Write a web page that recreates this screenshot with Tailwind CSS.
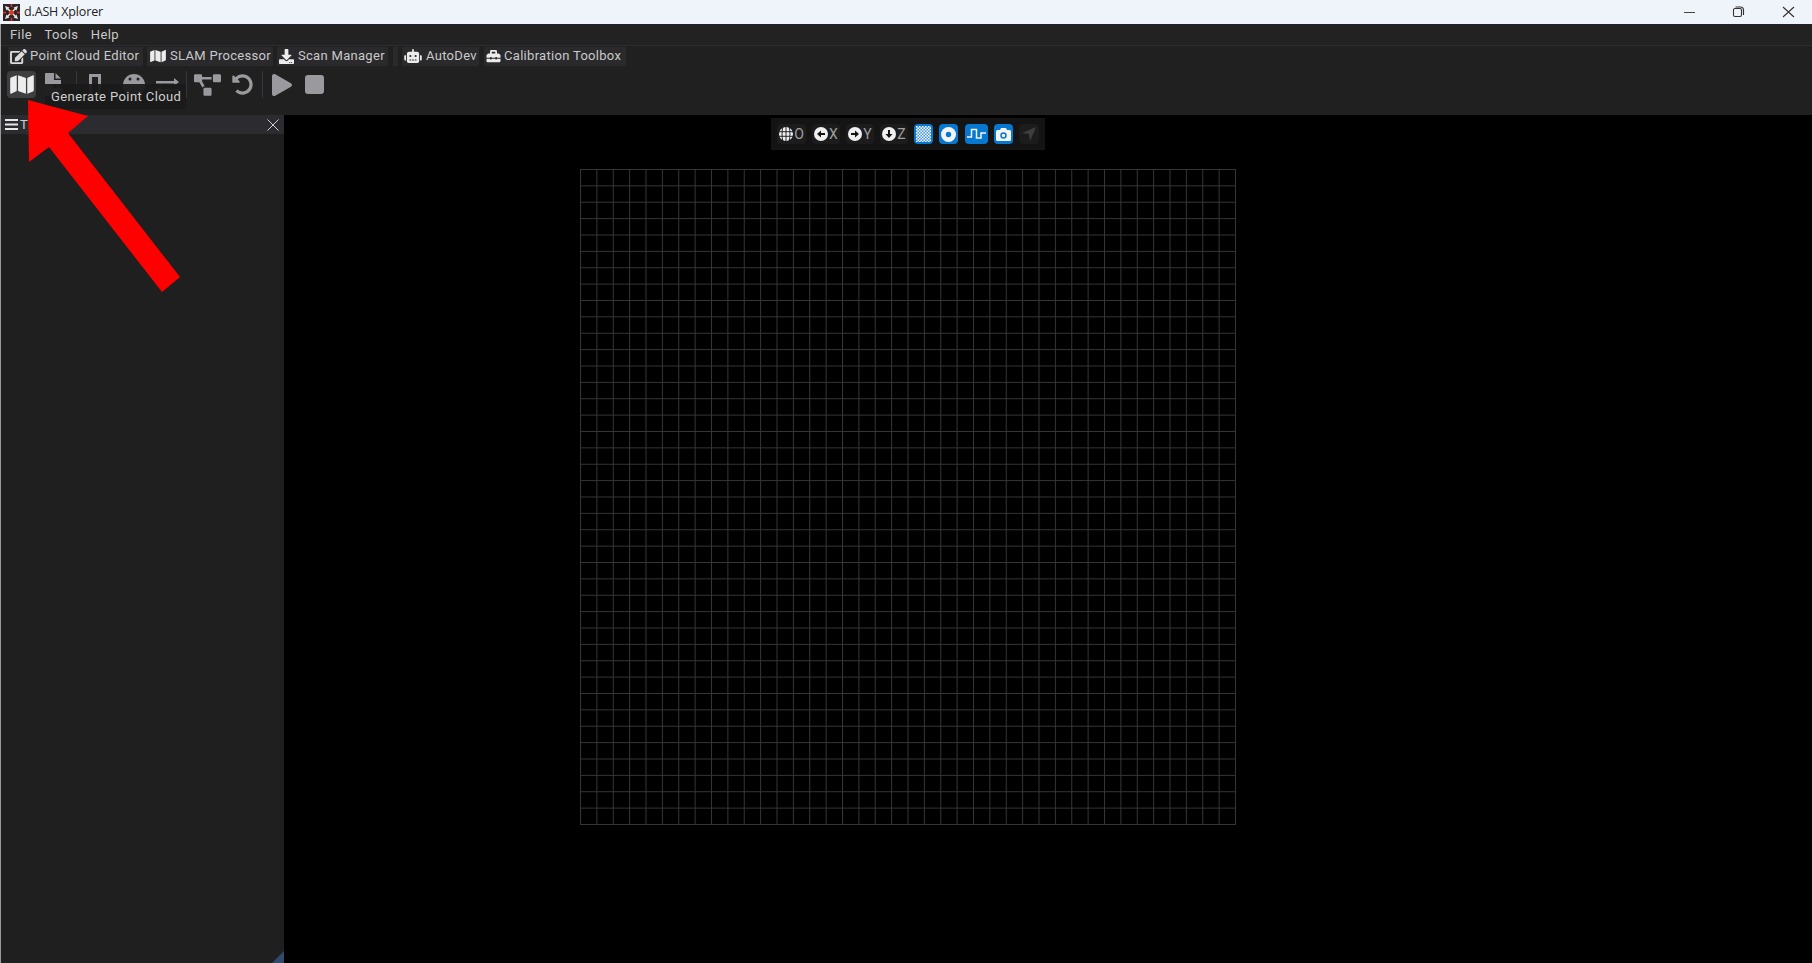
<!doctype html>
<html><head><meta charset="utf-8"><script src="https://cdn.jsdelivr.net/npm/@tailwindcss/browser@4"></script></head>
<body class="w-[1812px] h-[963px] overflow-hidden bg-black font-['Roboto',sans-serif]">
<div class="relative w-[1812px] h-[963px] flex flex-col border-l border-[#9a9a9a]">
  <div class="h-6 shrink-0 bg-[#eff4fb] flex items-center -ml-px">
    <svg class="w-[17px] h-[17px] ml-[3px]" viewBox="0 0 17 17"><rect width="17" height="17" fill="#2b2428"/><path d="M2 2l4.500 1.500-3 3zM15 2l-4.500 1.500 3 3zM2 15l4.500-1.500-3-3zM15 15l-4.500-1.500 3-3z" fill="#e9e3dc"/><path d="M4 4l9 9M13 4l-9 9" stroke="#e9e3dc" stroke-width="1.500"/><path d="M8.500 5.500l3 3-3 3-3-3z" fill="#e8351f"/><path d="M8.500 0v3M8.500 14v3M0 8.500h3M14 8.500h3" stroke="#e8351f" stroke-width="1.500"/></svg>
    <span class="ml-1 text-[12.5px] text-[#222] whitespace-nowrap font-['Open_Sans',sans-serif] tracking-[-0.15px]">d.ASH Xplorer</span>
    <div class="ml-auto flex items-center">
      <div class="w-[47px] flex justify-center"><div class="w-[11px] h-px bg-[#444]"></div></div>
      <svg class="w-[50px] h-3" viewBox="0 0 50 12" fill="none" stroke="#333" stroke-width="1.100"><rect x="20.500" y="2.500" width="8" height="8" rx="1.500"/><path d="M22.500 1h5a3 3 0 0 1 3 3v5"/></svg>
      <svg class="w-[49px] h-3" viewBox="0 0 49 12" fill="none" stroke="#333" stroke-width="1.100"><path d="M20 1l11 10M31 1L20 11"/></svg>
    </div>
  </div>
  <div class="h-[21px] shrink-0 bg-[#222222] flex items-center pl-[9px] gap-[12.500px] text-[13px] tracking-[0.4px] text-[#c9c9c9] whitespace-nowrap">
    <span>File</span><span>Tools</span><span>Help</span>
  </div>
  <div class="h-[21px] shrink-0 bg-[#202020] border-t border-[#2b2e31] flex items-center pl-[7px] text-[13px] tracking-[0.3px] text-[#c9c9c9] whitespace-nowrap">
    <div class="h-[19px] w-[135px] bg-[#2a2a2c] flex items-center gap-[3px] pl-[2px]">
      <svg class="w-[17px] h-[15px]" viewBox="0 0 576 512" fill="#dcdcdc"><path d="M402.600 83.200l90.200 90.200c3.800 3.800 3.800 10 0 13.800L274.400 405.600l-92.800 10.300c-12.400 1.400-22.900-9.100-21.500-21.500l10.300-92.800L388.800 83.200c3.800-3.800 10-3.800 13.800 0zm162-22.900l-48.800-48.800c-15.200-15.200-39.900-15.200-55.200 0l-35.400 35.400c-3.800 3.800-3.800 10 0 13.800l90.200 90.200c3.800 3.800 10 3.800 13.800 0l35.400-35.400c15.200-15.300 15.200-40 0-55.200zM384 346.200V448H64V128h229.800c3.200 0 6.200-1.300 8.500-3.500l40-40c7.600-7.600 2.200-20.500-8.500-20.500H48C21.500 64 0 85.500 0 112v352c0 26.500 21.500 48 48 48h352c26.500 0 48-21.500 48-48V306.200c0-10.700-12.900-16-20.500-8.500l-40 40c-2.200 2.300-3.500 5.300-3.500 8.500z"/></svg>
      <span>Point Cloud Editor</span>
    </div>
    <div class="h-[19px] w-[126px] ml-1 bg-[#2a2a2c] flex items-center gap-1 pl-[3px]">
      <svg class="w-4 h-[14px]" viewBox="0 0 576 512" fill="#ececec"><path d="M0 117.660v346.320c0 11.320 11.430 19.060 21.940 14.860L160 416V32L20.120 87.950A32.006 32.006 0 0 0 0 117.660zM192 416l192 64V96L192 32v384zM554.060 33.160L416 96v384l139.880-55.950A31.996 31.996 0 0 0 576 394.340V48.020c0-11.320-11.430-19.060-21.940-14.860z"/></svg>
      <span>SLAM Processor</span>
    </div>
    <div class="h-[19px] w-[111px] ml-1 bg-[#2a2a2c] flex items-center gap-1 pl-[2px]">
      <svg class="w-[15px] h-[15px]" viewBox="0 0 512 512" fill="#ececec"><path d="M216 0h80c13.300 0 24 10.700 24 24v168h87.700c17.800 0 26.700 21.500 14.100 34.100L269.700 378.300c-7.500 7.500-19.800 7.500-27.300 0L90.100 226.100c-12.600-12.600-3.700-34.100 14.100-34.100H192V24c0-13.300 10.700-24 24-24zm296 376v112c0 13.300-10.700 24-24 24H24c-13.300 0-24-10.700-24-24V376c0-13.300 10.700-24 24-24h146.700l49 49c20.100 20.100 52.500 20.100 72.600 0l49-49H488c13.300 0 24 10.700 24 24zm-124 88c0-11-9-20-20-20s-20 9-20 20 9 20 20 20 20-9 20-20zm64 0c0-11-9-20-20-20s-20 9-20 20 9 20 20 20 20-9 20-20z"/></svg>
      <span>Scan Manager</span>
    </div>
    <div class="h-[19px] w-[5px] ml-[5px] bg-[#2a2a2c]"></div>
    <div class="h-[19px] w-[77px] ml-1 bg-[#2a2a2c] flex items-center gap-1 pl-[2px]">
      <svg class="w-[18px] h-[14px]" viewBox="0 0 640 512" fill="#ececec"><path d="M32 224H64V416H32A32 32 0 0 1 0 384V256A32 32 0 0 1 32 224Zm512-48V448a64 64 0 0 1-64 64H160a64 64 0 0 1-64-64V176a80 80 0 0 1 80-80H288V32a32 32 0 0 1 64 0V96H464A80 80 0 0 1 544 176ZM264 256a40 40 0 1 0-40 40A40 40 0 0 0 264 256Zm-8 128H192v32h64Zm96 0H288v32h64ZM456 256a40 40 0 1 0-40 40A40 40 0 0 0 456 256Zm-8 128H384v32h64ZM640 256V384a32 32 0 0 1-32 32H576V224h32A32 32 0 0 1 640 256Z"/></svg>
      <span>AutoDev</span>
    </div>
    <div class="h-[19px] w-[142px] ml-[5px] bg-[#2a2a2c] flex items-center gap-[3px] pl-[2px]">
      <svg class="w-[15px] h-[14px]" viewBox="0 0 512 512" fill="#ececec"><path d="M502.630 214.630l-45.250-45.250c-6-6-14.140-9.370-22.630-9.370H384V80c0-26.510-21.490-48-48-48H176c-26.510 0-48 21.490-48 48v80H77.250c-8.490 0-16.620 3.370-22.630 9.370L9.370 214.630c-6 6-9.370 14.140-9.370 22.630V320h128v-16c0-8.840 7.160-16 16-16h32c8.840 0 16 7.160 16 16v16h128v-16c0-8.840 7.160-16 16-16h32c8.840 0 16 7.160 16 16v16h128v-82.750c0-8.480-3.370-16.620-9.370-22.620zM320 160H192V96h128v64zm64 208c0 8.840-7.160 16-16 16h-32c-8.840 0-16-7.160-16-16v-16H192v16c0 8.840-7.160 16-16 16h-32c-8.840 0-16-7.160-16-16v-16H0v96c0 17.670 14.330 32 32 32h448c17.670 0 32-14.330 32-32v-96H384v16z"/></svg>
      <span>Calibration Toolbox</span>
    </div>
  </div>
  <div class="h-[49px] shrink-0 bg-[#202020] flex items-center pl-[6px] pb-[12px]">
    <div class="w-[29px] h-[27px] rounded-sm bg-[#3e3e40] flex items-center justify-center">
      <svg class="w-[24px] h-[21px]" viewBox="0 0 576 512" fill="#ececec"><path d="M0 117.660v346.320c0 11.320 11.430 19.060 21.940 14.860L160 416V32L20.120 87.950A32.006 32.006 0 0 0 0 117.660zM192 416l192 64V96L192 32v384zM554.060 33.160L416 96v384l139.880-55.950A31.996 31.996 0 0 0 576 394.340V48.020c0-11.320-11.430-19.060-21.940-14.860z"/></svg>
    </div>
    <svg class="ml-[9px] w-[20px] h-[24px]" viewBox="0 0 20 24" fill="#9a9a9e"><path d="M0 1a1 1 0 0 1 1-1h8v7h7v4H8v4h8v8H1a1 1 0 0 1-1-1zM10.500 0 16 5.500h-5.500zM12 12l7 5-7 5z"/></svg>
    <div class="w-px h-[27px] bg-[#34383c] ml-[11px]"></div>
    <svg class="ml-[12px] w-[12px] h-[22px]" viewBox="0 0 12 22" fill="none" stroke="#9a9a9e" stroke-width="3"><path d="M1.500 22V1.500h9V22"/></svg>
    <svg class="ml-[22px] w-[22px] h-[22px]" viewBox="0 0 22 22" fill="#9a9a9e"><circle cx="11" cy="11" r="11"/><circle cx="7" cy="5" r="1.500" fill="#202020"/><circle cx="15" cy="5" r="1.500" fill="#202020"/></svg>
    <svg class="ml-[11px] w-[23px] h-[22px]" viewBox="0 0 23 22" fill="#9a9a9e"><path d="M0 7h18V4l5 4-5 4V9.500H0zM23 15H5v-3l-5 4 5 4v-2.500h18z"/></svg>
    <div class="w-px h-[27px] bg-[#34383c] ml-[7px]"></div>
    <svg class="ml-[7px] w-[27px] h-[22px]" viewBox="0 0 640 512" fill="#9a9a9e"><path d="M384 320H256c-17.670 0-32 14.330-32 32v128c0 17.670 14.330 32 32 32h128c17.670 0 32-14.330 32-32V352c0-17.670-14.330-32-32-32zM192 32c0-17.670-14.330-32-32-32H32C14.330 0 0 14.330 0 32v128c0 17.670 14.330 32 32 32h95.720l73.160 128.040C211.980 300.980 232.400 288 256 288h.28L192 175.510V128h224V64H192V32zM608 0H480c-17.670 0-32 14.330-32 32v128c0 17.670 14.330 32 32 32h128c17.670 0 32-14.330 32-32V32c0-17.670-14.330-32-32-32z"/></svg>
    <svg class="ml-[11px] w-[21px] h-[21px]" viewBox="0 0 512 512" fill="#9a9a9e"><path d="M255.545 8c-66.269.119-126.438 26.233-170.860 68.685L48.971 40.971C33.851 25.851 8 36.559 8 57.941V192c0 13.255 10.745 24 24 24h134.059c21.382 0 32.090-25.851 16.971-40.971l-41.750-41.750c30.864-28.899 70.801-44.907 113.230-45.273 92.398-.798 170.283 73.977 169.484 169.442C423.236 348.009 349.816 424 256 424c-41.127 0-79.997-14.678-110.630-41.556-4.743-4.161-11.906-3.908-16.368.553L89.340 422.659c-4.872 4.872-4.631 12.815.482 17.433C133.798 479.813 192.074 504 256 504c136.966 0 247.999-111.033 248-247.998C504.001 119.193 392.354 7.755 255.545 8z"/></svg>
    <div class="w-px h-[27px] bg-[#34383c] ml-[9px]"></div>
    <svg class="ml-[9px] w-[20px] h-[22px]" viewBox="0 0 448 512" preserveAspectRatio="none" fill="#9a9a9e"><path d="M424.400 214.700L72.400 6.600C43.800-10.300 0 6.100 0 47.900V464c0 37.500 40.700 60.100 72.400 41.300l352-208c31.400-18.500 31.500-64.100 0-82.600z"/></svg>
    <div class="ml-[13px] w-[19px] h-[19px] rounded-[3px] bg-[#9a9a9e]"></div>
  </div>
  <div class="flex-1 flex min-h-0">
    <div class="w-[283px] shrink-0 bg-[#1f1f1f] flex flex-col relative">
      <div class="h-[19px] bg-[#2c2c30] flex items-center pl-[4px] pr-[5px] text-[13px] text-[#d0d0d0]">
        <svg class="w-[13px] h-[11px]" viewBox="0 0 13 11" fill="#e6e6e6"><path d="M0 0h13v2H0zM0 4.500h13v2H0zM0 9h13v2H0z"/></svg>
        <span class="ml-[2px]">T</span>
        <svg class="ml-auto w-[12px] h-[12px]" viewBox="0 0 12 12" stroke="#cfcfcf" stroke-width="1"><path d="M.5.500l11 11M11.500.500l-11 11"/></svg>
      </div>
      <div class="absolute right-0 bottom-0 w-0 h-0 border-l-[12px] border-l-transparent border-b-[12px] border-b-[#2f4a6b]"></div>
    </div>
    <div class="flex-1 relative bg-black">
      <div class="mt-[3px] ml-[487px] h-8 w-[274px] bg-[#141414] flex items-center pl-[6px] gap-[6px] text-[14px] text-[#a0a0a0]">
        <div class="w-[29px] h-5 rounded-sm bg-[#1c1c1c] flex items-center justify-center gap-px"><svg class="w-[14px] h-[14px]" viewBox="0 0 14 14" fill="#f0f0f0"><circle cx="7" cy="7" r="7"/><path d="M0 4.700h14M0 9.300h14M7 0v14M3.800 0c-1 4-1 10 0 14M10.200 0c1 4 1 10 0 14" stroke="#141414" stroke-width=".9" fill="none"/></svg><span>O</span></div>
        <div class="w-[28px] h-5 rounded-sm bg-[#1c1c1c] flex items-center justify-center gap-px"><svg class="w-[14px] h-[14px]" viewBox="0 0 14 14"><circle cx="7" cy="7" r="7" fill="#f0f0f0"/><path d="M3 7l4-3.500V6h4v2H7v2.500z" fill="#141414"/></svg><span>X</span></div>
        <div class="w-[28px] h-5 rounded-sm bg-[#1c1c1c] flex items-center justify-center gap-px"><svg class="w-[14px] h-[14px]" viewBox="0 0 14 14"><circle cx="7" cy="7" r="7" fill="#f0f0f0"/><path d="M11 7L7 3.500V6H3v2h4v2.500z" fill="#141414"/></svg><span>Y</span></div>
        <div class="w-[28px] h-5 rounded-sm bg-[#1c1c1c] flex items-center justify-center gap-px"><svg class="w-[14px] h-[14px]" viewBox="0 0 14 14"><circle cx="7" cy="7" r="7" fill="#f0f0f0"/><path d="M7 11l3.500-4H8V3H6v4H3.500z" fill="#141414"/></svg><span>Z</span></div>
        <div class="w-[19px] h-5 rounded-sm bg-[#0678d0] flex items-center justify-center"><svg class="w-[15px] h-[16px]" viewBox="0 0 15 16"><defs><pattern id="c" width="3" height="3" patternUnits="userSpaceOnUse"><rect width="1.500" height="1.500" fill="#fff"/><rect x="1.500" y="1.500" width="1.500" height="1.500" fill="#fff"/></pattern></defs><rect width="15" height="16" fill="#3f95dc"/><rect width="15" height="16" fill="url(#c)"/></svg></div>
        <div class="w-[19px] h-5 rounded-sm bg-[#0678d0] flex items-center justify-center"><svg class="w-[15px] h-[15px]" viewBox="0 0 14 14"><circle cx="7" cy="7" r="7" fill="#f4f4f4"/><circle cx="7" cy="7" r="2.500" fill="#0678d0"/></svg></div>
        <div class="w-[23px] h-5 ml-px rounded-sm bg-[#0678d0] flex items-center justify-center"><svg class="w-[19px] h-[14px]" viewBox="0 0 19 14" fill="none" stroke="#f4f4f4" stroke-width="1.500"><path d="M0 10h4.500V2.500h5V11H14V6h5"/></svg></div>
        <div class="w-[19px] h-5 rounded-sm bg-[#0678d0] flex items-center justify-center"><svg class="w-[15px] h-[13px]" viewBox="0 0 15 13"><path d="M0 3.500A1.500 1.500 0 0 1 1.500 2h2.500l1-2h5l1 2h2.500A1.500 1.500 0 0 1 15 3.500V11.500A1.500 1.500 0 0 1 13.500 13h-12A1.500 1.500 0 0 1 0 11.500z" fill="#f4f4f4"/><circle cx="7.500" cy="7.500" r="2.500" fill="none" stroke="#0678d0" stroke-width="1.500"/></svg></div>
        <div class="w-[20px] h-5 rounded-sm bg-[#1c1c1c] flex items-center justify-center"><svg class="w-[14px] h-[14px]" viewBox="0 0 14 14" fill="#3f3f3f"><path d="M14 0L0 6l7 1 1 7z"/></svg></div>
      </div>
      <svg class="absolute left-[296px] top-[53.500px] w-[656px] h-[656px]" viewBox="0 0 656 656">
        <defs><pattern id="g" width="16.375" height="16.375" patternUnits="userSpaceOnUse"><path d="M.5 0V16.375M0 .5H16.375" stroke="#363636" stroke-width="1" fill="none"/></pattern></defs>
        <rect width="656" height="656" fill="url(#g)"/><path d="M655.500 0V655.500H0" stroke="#363636" fill="none"/>
      </svg>
    </div>
  </div>
  <div class="absolute left-[44px] top-[84px] z-10 h-[25px] w-[141px] bg-[#1a1a1a]/95 text-[13px] tracking-[0.4px] text-[#cfcfcf] whitespace-nowrap flex items-center pl-[6px]">Generate Point Cloud</div>
  <svg class="absolute -left-px top-0 w-[300px] h-[300px] z-20 pointer-events-none" viewBox="0 0 300 300"><polygon points="28,100 88,116 68,133 180,277 162,292 49,147 29,162" fill="#ff0000"/></svg>
</div>
</body></html>
